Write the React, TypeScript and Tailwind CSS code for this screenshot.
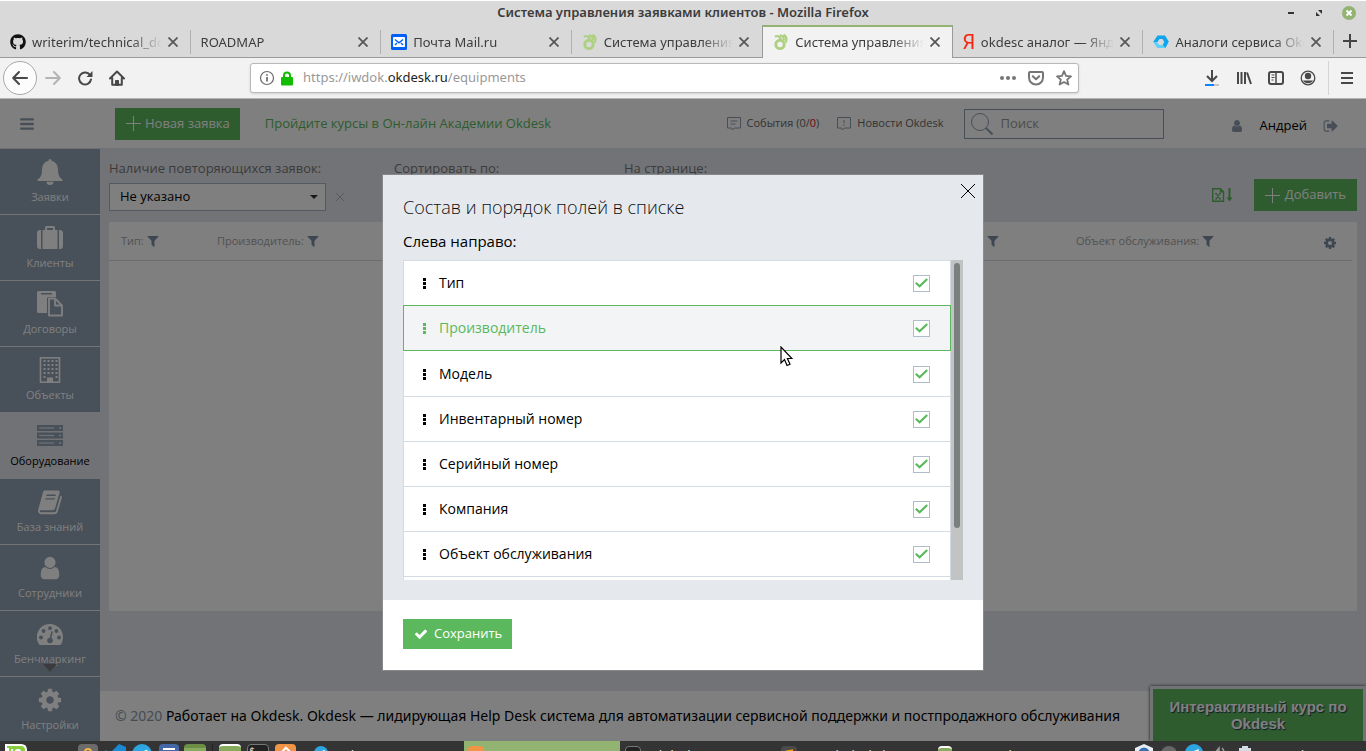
import React from 'react';
import { FaGithub } from 'react-icons/fa';

type IconProps = { className?: string };

const FILTER =
  'M1595 295q17 41-14 70l-493 493v742q0 42-39 59-13 5-25 5-27 0-45-19l-256-256q-19-19-19-45v-486l-493-493q-31-29-14-70 17-39 59-39h1280q42 0 59 39z';
const BARS =
  'M1664 1344v128q0 26-19 45t-45 19h-1408q-26 0-45-19t-19-45v-128q0-26 19-45t45-19h1408q26 0 45 19t19 45zm0-512v128q0 26-19 45t-45 19h-1408q-26 0-45-19t-19-45v-128q0-26 19-45t45-19h1408q26 0 45 19t19 45zm0-512v128q0 26-19 45t-45 19h-1408q-26 0-45-19t-19-45v-128q0-26 19-45t45-19h1408q26 0 45 19t19 45z';
const USER =
  'M1536 1399q0 109-62.5 187t-150.5 78h-854q-88 0-150.5-78t-62.5-187q0-85 8.5-160.5t31.5-152 58.5-131 94-89 134.5-34.5q131 128 313 128t313-128q76 0 134.5 34.5t94 89 58.5 131 31.5 152 8.5 160.5zm-256-887q0 159-112.5 271.5t-271.5 112.5-271.5-112.5-112.5-271.5 112.5-271.5 271.5-112.5 271.5 112.5 112.5 271.5z';
const COG =
  'M1152 896q0-106-75-181t-181-75-181 75-75 181 75 181 181 75 181-75 75-181zm512-109v222q0 12-8 23t-20 13l-185 28q-19 54-39 91 35 50 107 138 10 12 10 25t-9 23q-27 37-99 108t-94 71q-12 0-26-9l-138-108q-44 23-91 38-16 136-29 186-7 28-36 28h-222q-14 0-24.5-8.5t-11.5-21.5l-28-184q-49-16-90-37l-141 107q-10 9-25 9-14 0-25-11-126-114-165-168-7-10-7-23 0-12 8-23 15-21 51-66.5t54-70.5q-27-50-41-99l-183-27q-13-2-21-12.5t-8-23.5v-222q0-12 8-23t19-13l186-28q14-46 39-92-40-57-107-138-10-12-10-24 0-10 9-23 26-36 98.5-107.5t94.5-71.5q13 0 26 10l138 107q44-23 91-38 16-136 29-186 7-28 36-28h222q14 0 24.5 8.5t11.5 21.5l28 184q49 16 90 37l142-107q9-9 24-9 13 0 25 10 129 119 165 170 7 8 7 22 0 12-8 23-15 21-51 66.5t-54 70.5q26 50 41 98l183 28q13 2 21 12.5t8 23.5z';
const SIGN_OUT =
  'M704 1440q0 4 1 20t.5 26.5-3 23.5-10 19.5-20.5 6.5h-320q-119 0-203.5-84.5t-84.5-203.5v-704q0-119 84.5-203.5t203.5-84.5h320q13 0 22.5 9.5t9.5 22.5q0 4 1 20t.5 26.5-3 23.5-10 19.5-20.5 6.5h-320q-66 0-113 47t-47 113v704q0 66 47 113t113 47h312l11.5 1 11.5 3 8 5.5 7 9 2 13.5zm928-544q0 26-19 45l-544 544q-19 19-45 19t-45-19-19-45v-288h-448q-26 0-45-19t-19-45v-384q0-26 19-45t45-19h448v-288q0-26 19-45t45-19 45 19l544 544q19 19 19 45z';
const CHECK =
  'M1671 566q0 40-28 68l-724 724-136 136q-28 28-68 28t-68-28l-136-136-362-362q-28-28-28-68t28-68l136-136q28-28 68-28t68 28l294 295 656-657q28-28 68-28t68 28l136 136q28 28 28 68z';

function Glyph({ d, className }: { d: string; className?: string }) {
  return (
    <svg viewBox="0 0 1792 1792" fill="currentColor" className={className} aria-hidden="true">
      <path d={d} />
    </svg>
  );
}

/* ---------- Browser icons ---------- */

const CloseGlyph = ({ className }: IconProps) => (
  <svg viewBox="0 0 10 10" className={className} stroke="currentColor" fill="none" strokeWidth="1.7" aria-hidden="true">
    <path d="M0.5 0.5 9.5 9.5M9.5 0.5 0.5 9.5" />
  </svg>
);

const MailLogo = () => (
  <svg viewBox="0 0 16 16" className="size-4 shrink-0" aria-hidden="true">
    <rect width="16" height="16" rx="1.5" fill="#005ff9" />
    <rect x="2" y="3" width="12" height="10" rx="0.8" fill="#fff" />
    <path d="M4 5.500 8 8.800 12 5.500M4 11 6 9M12 11 10 9" stroke="#005ff9" strokeWidth="1.400" fill="none" />
  </svg>
);

const OkdeskLogo = () => (
  <svg viewBox="0 0 16 16" className="size-4 shrink-0" fill="none" stroke="#aed081" aria-hidden="true">
    <circle cx="7" cy="10.400" r="4.200" strokeWidth="2.900" />
    <path d="M2 2.800C4 1.200 6.500 2 8 5.500M6.800 1.300C9 1.300 10.800 3 11 6.500M10.500 0.700c3 1.500 3.600 4.300 2.200 8" strokeWidth="2.200" />
  </svg>
);

const YandexLogo = () => (
  <span className="flex w-3 shrink-0 justify-center font-['Roboto',sans-serif] text-[20px] leading-4 text-[#f8240f]">Я</span>
);

const HexLogo = () => (
  <svg viewBox="0 0 16 16" className="size-4 shrink-0" aria-hidden="true">
    <path d="M4.500 1.500H12L15.800 7.500 12.500 14 9.500 11.500 11.200 8 9.500 5H6.500L4 8.500 0.200 8z" fill="#0ea5ee" />
    <path d="M0.200 8 4 8.500 6.500 11h3.200l2.800 3H4.200z" fill="#5fd0fb" />
  </svg>
);

const tabs = [
  { title: 'writerim/technical_docs', icon: <FaGithub className="size-4 shrink-0 text-[#111]" /> },
  { title: 'ROADMAP', icon: null },
  { title: 'Почта Mail.ru', icon: <MailLogo /> },
  { title: 'Система управления заявками', icon: <OkdeskLogo /> },
  { title: 'Система управления заявками', icon: <OkdeskLogo />, active: true },
  { title: 'okdesc аналог — Яндекс', icon: <YandexLogo /> },
  { title: 'Аналоги сервиса Okdesk', icon: <HexLogo /> },
];

function TitleBar() {
  return (
    <div className="flex h-[25px] items-center border-t border-white px-2.5">
      <div className="w-20" />
      <h1 className="flex-1 text-center text-[13px] font-semibold text-[#3c3c3c]">
        Система управления заявками клиентов - Mozilla Firefox
      </h1>
      <div className="flex w-20 items-center justify-end gap-[18px]">
        <button aria-label="Свернуть">
          <svg viewBox="0 0 10 10" className="size-2.5"><path d="M2 5h6" stroke="#333" strokeWidth="2" /></svg>
        </button>
        <button aria-label="Развернуть">
          <svg viewBox="0 0 10 10" className="size-2.5" fill="#333"><path d="M4 2h4v4zM2 4v4h4z" /></svg>
        </button>
        <button aria-label="Закрыть">
          <svg viewBox="0 0 14 14" className="size-3.5">
            <circle cx="7" cy="7" r="7" fill="#92b372" />
            <path d="M4.500 4.500l5 5M9.500 4.500l-5 5" stroke="#fff" strokeWidth="1.800" />
          </svg>
        </button>
      </div>
    </div>
  );
}

function TabStrip() {
  return (
    <div className="flex h-[33px]">
      <div className="grid flex-1 grid-cols-7">
        {tabs.map((t, i) => (
          <div
            key={i}
            className={
              t.active
                ? 'flex min-w-0 items-center border-x border-t-2 border-x-[#9a9a9a] border-t-[#92b372] bg-[#f2f2f2] pr-3 pb-px pl-2.5'
                : 'flex min-w-0 items-center border-b border-[#9a9a9a] pt-0.5 pl-2.5'
            }
          >
            <div className="flex min-w-0 flex-1 items-center gap-1.5">
              {t.icon}
              <span className="flex-1 overflow-hidden text-[13px] leading-5 whitespace-nowrap text-[#3c3c3c] [mask-image:linear-gradient(to_right,black_calc(100%-32px),transparent)]">
                {t.title}
              </span>
            </div>
            <button aria-label="Закрыть вкладку" className="ml-1.5">
              <CloseGlyph className="size-2.5 text-[#555]" />
            </button>
            {!t.active && <span className={i === 3 ? 'ml-3 w-px' : 'ml-3 h-6 w-px bg-[#b0b0b0]'} />}
          </div>
        ))}
      </div>
      <button aria-label="Новая вкладка" className="flex w-8 items-center justify-center border-b border-[#9a9a9a]">
        <svg viewBox="0 0 14 14" className="size-3.5" stroke="#444" strokeWidth="2"><path d="M7 0v14M0 7h14" /></svg>
      </button>
    </div>
  );
}

function NavBar() {
  return (
    <div className="flex h-[41px] items-center border-b border-[#b4b4b4] bg-[#f2f2f2] pr-2.5 pl-[3px] text-[#484848]">
      <button aria-label="Назад" className="flex size-[34px] items-center justify-center rounded-full border border-[#a8a8a8] bg-[#fcfcfc]">
        <svg viewBox="0 0 16 16" className="size-4" fill="none" stroke="currentColor" strokeWidth="2" strokeLinecap="round" strokeLinejoin="round">
          <path d="M15 8H1.500M7 2 1.200 8 7 14" />
        </svg>
      </button>
      <button aria-label="Вперёд" className="ml-2 text-[#b4b4b4]">
        <svg viewBox="0 0 16 16" className="size-4" fill="none" stroke="currentColor" strokeWidth="2" strokeLinecap="round" strokeLinejoin="round">
          <path d="M1 8h13.500M9 2l5.800 6L9 14" />
        </svg>
      </button>
      <button aria-label="Обновить" className="ml-4">
        <svg viewBox="0 0 16 16" className="size-4" fill="none" stroke="currentColor" strokeWidth="2">
          <path d="M13.300 5.500A6 6 0 1 0 14 9.500" strokeLinecap="round" />
          <path d="M15.500 1v6h-6z" fill="currentColor" stroke="none" />
        </svg>
      </button>
      <button aria-label="Домой" className="ml-4">
        <svg viewBox="0 0 16 16" className="size-4" fill="none" stroke="currentColor" strokeWidth="2" strokeLinecap="round" strokeLinejoin="round">
          <path d="M1 8.500 8 1.500l7 7M3.200 8v6.800h9.600V8" />
          <path d="M6.500 15v-4.500h3V15z" fill="currentColor" strokeWidth="1" />
        </svg>
      </button>
      <div className="ml-[125px] flex h-[30px] w-[829px] items-center rounded-[3px] border border-[#b8b8b8] bg-white pr-1.5 pl-2 shadow-sm">
        <svg viewBox="0 0 16 16" className="size-4" fill="none" stroke="#6a6a6a" aria-hidden="true">
          <circle cx="8" cy="8" r="6.500" strokeWidth="1.200" />
          <path d="M8 7v4.500M8 4.200v1.600" strokeWidth="1.700" />
        </svg>
        <svg viewBox="0 0 12 15" className="ml-1.5 h-[15px] w-3" aria-hidden="true">
          <rect y="6" width="12" height="8.500" rx="1" fill="#12bc00" />
          <path d="M3 7V4.500a3 3 0 0 1 6 0V7" stroke="#12bc00" strokeWidth="2" fill="none" />
        </svg>
        <span className="ml-2.5 flex-1 text-[13px] text-[#999]">
          https://iwdok.<span className="text-[#222]">okdesk.ru</span>/equipments
        </span>
        <div className="flex items-center gap-3 text-[#757575]">
          <button aria-label="Действия">
            <svg viewBox="0 0 16 16" className="size-4" fill="currentColor">
              <circle cx="2" cy="8" r="2" /><circle cx="8" cy="8" r="2" /><circle cx="14" cy="8" r="2" />
            </svg>
          </button>
          <button aria-label="Pocket">
            <svg viewBox="0 0 16 16" className="size-4" fill="none" stroke="currentColor" strokeWidth="2" strokeLinecap="round" strokeLinejoin="round">
              <path d="M2 2h12a1 1 0 0 1 1 1v4.500a7 7 0 0 1-14 0V3a1 1 0 0 1 1-1zM4.800 6.200 8 9.300l3.200-3.100" />
            </svg>
          </button>
          <button aria-label="В закладки">
            <svg viewBox="0 0 16 16" className="size-4" fill="none" stroke="currentColor" strokeWidth="1.800" strokeLinejoin="round">
              <path d="M8 1.200l2 4.600 5 .5-3.800 3.300 1.200 5L8 12l-4.400 2.600 1.200-5L1 6.300l5-.5z" />
            </svg>
          </button>
        </div>
      </div>
      <div className="ml-auto flex items-center gap-4">
        <button aria-label="Загрузки">
          <svg viewBox="0 0 16 16" className="size-4" fill="none" strokeWidth="2">
            <path d="M8 0v10M3 6l5 5 5-5" stroke="currentColor" />
            <path d="M1 15h9" stroke="#0a84ff" /><path d="M10 15h5" stroke="#c4c4c4" />
          </svg>
        </button>
        <button aria-label="Библиотека">
          <svg viewBox="0 0 16 16" className="size-4" fill="none" stroke="currentColor" strokeWidth="2">
            <path d="M2 2v12M5.500 2v12M9 2v12M11 2.500 15 14" />
          </svg>
        </button>
        <button aria-label="Боковые панели">
          <svg viewBox="0 0 16 16" className="size-4" fill="none" stroke="currentColor">
            <rect x="1" y="2" width="14" height="12" rx="2" strokeWidth="2" />
            <path d="M8 2v12" strokeWidth="1.500" /><path d="M3.500 5h3M3.500 7.500h3M3.500 10h2" />
          </svg>
        </button>
        <button aria-label="Аккаунт">
          <svg viewBox="0 0 16 16" className="size-4" fill="currentColor">
            <circle cx="8" cy="8" r="6.800" fill="none" stroke="currentColor" strokeWidth="1.300" />
            <circle cx="8" cy="6" r="3.200" /><path d="M3 10.500h10a5.800 5.800 0 0 1-10 0z" />
          </svg>
        </button>
        <span className="-ml-1 h-[34px] w-px bg-[#d5d5d5]" />
        <button aria-label="Меню" className="-ml-1.5 pr-px">
          <svg viewBox="0 0 16 16" className="size-4" stroke="currentColor" strokeWidth="2"><path d="M2 3h12M2 8h12M2 13h12" /></svg>
        </button>
      </div>
    </div>
  );
}

/* ---------- Sidebar ---------- */

const Bell = () => (
  <svg viewBox="0 0 26 26" className="size-[26px]" fill="currentColor">
    <path d="M13 0c1 0 1.600.7 1.500 1.800C19 2.800 21 6.500 21 11c0 5 1.500 8 4.500 9.500V22H.5v-1.500C3.500 19 5 16 5 11c0-4.500 2-8.200 6.500-9.200C11.400.7 12 0 13 0zM9.500 22.800h7a3.500 3.200 0 0 1-7 0z" />
  </svg>
);
const Suitcase = () => (
  <svg viewBox="0 0 26 26" className="size-[26px]" fill="currentColor">
    <path d="M0 8a3 3 0 0 1 3-3h1v19H3a3 3 0 0 1-3-3zM26 8a3 3 0 0 0-3-3h-1v19h1a3 3 0 0 0 3-3zM5.500 5H8V2.500A1.500 1.500 0 0 1 9.500 1h7A1.500 1.500 0 0 1 18 2.500V5h2.500v19h-15zM10 5h6V3h-6z" />
  </svg>
);
const Papers = () => (
  <svg viewBox="0 0 26 26" className="size-[26px]" fill="currentColor">
    <path d="M1.500 0h16A1.500 1.500 0 0 1 19 1.500V6h-7.500A1.500 1.500 0 0 0 10 7.500V22H1.500A1.500 1.500 0 0 1 0 20.500v-19A1.500 1.500 0 0 1 1.500 0zM4 2v1.500h11V2z" fillRule="evenodd" />
    <path d="M12 7.500h6v7h7v10H12z" fill="none" stroke="currentColor" strokeWidth="1.800" strokeLinejoin="round" />
    <path d="M18 7.500l7 7" stroke="currentColor" strokeWidth="1.800" />
  </svg>
);
const Building = () => (
  <svg viewBox="0 0 26 26" className="size-[26px]">
    <rect x="3.500" y="0.800" width="19" height="24.400" fill="none" stroke="currentColor" strokeWidth="1.600" />
    {[3, 7, 11, 15].map((y) =>
      [7, 11, 15, 19].map((x) => <rect key={`${x}-${y}`} x={x - 0.5} y={y} width="2" height="2" fill="currentColor" />),
    )}
    <path d="M6.500 19h2v2h-2zM18.500 19h2v2h-2zM10 20.500h6V25h-6z" fill="currentColor" />
  </svg>
);
const Servers = () => (
  <svg viewBox="0 0 26 26" className="size-[26px]">
    {[2, 9.5, 17].map((y) => (
      <g key={y}>
        <rect y={y} width="26" height="6" fill="currentColor" />
        <path d={`M2 ${y + 3}h15`} stroke="#dfe3ea" strokeWidth="1.300" />
        <circle cx="23.200" cy={y + 3} r="1.100" fill="#dfe3ea" />
      </g>
    ))}
  </svg>
);
const Book = () => (
  <svg viewBox="0 0 26 26" className="size-[26px]" fill="currentColor">
    <path d="M8 1.500h13c1.500 0 2 1 1.600 2.200L18 19.500c-.4 1.200-1.200 1.700-2.300 1.700H4c-1 0-1.300.5-1 1.200.3.600.8.800 1.500.8h12.600c1 0 1.600-.4 1.900-1.200l4.600-15.500c1.200.6 1.500 1.300 1.200 2.500l-4.200 14c-.5 1.500-1.500 2.200-3 2.200H4.500C2 25.200.600 23.200 1.200 20.800L6 3.300C6.300 2.100 7 1.500 8 1.500zm1.600 4-.4 1.400h9.300l.4-1.400zm-1 3.700-.4 1.400h9.300l.4-1.400z" fillRule="evenodd" />
  </svg>
);
const Person = () => <Glyph d={USER} className="size-[26px]" />;
const Gauge = () => (
  <svg viewBox="0 0 26 26" className="size-[26px]">
    <path d="M13 3a13 13 0 0 1 13 13c0 3-.8 5.500-2.200 7.500-.3.400-.6.500-1 .5H3.200c-.4 0-.7-.1-1-.5A13 13 0 0 1 13 3z" fill="currentColor" />
    <g fill="#90a0b2">
      <circle cx="4" cy="16.500" r="1.900" /><circle cx="6.600" cy="10" r="1.900" /><circle cx="13" cy="7.200" r="1.900" />
      <circle cx="19.400" cy="10" r="1.900" /><circle cx="22" cy="16.500" r="1.900" /><circle cx="13" cy="19.500" r="2.800" />
    </g>
    <path d="M13 19l2-8" stroke="#90a0b2" strokeWidth="1.500" strokeLinecap="round" />
  </svg>
);
const Gear = () => <Glyph d={COG} className="size-[26px]" />;

const menu = [
  { label: 'Заявки', Icon: Bell },
  { label: 'Клиенты', Icon: Suitcase },
  { label: 'Договоры', Icon: Papers },
  { label: 'Объекты', Icon: Building },
  { label: 'Оборудование', Icon: Servers, active: true },
  { label: 'База знаний', Icon: Book },
  { label: 'Сотрудники', Icon: Person },
  { label: 'Бенчмаркинг', Icon: Gauge, more: true },
  { label: 'Настройки', Icon: Gear },
];

function Sidebar() {
  return (
    <nav className="flex w-[100px] shrink-0 flex-col overflow-hidden bg-[#90a0b2]">
      {menu.map(({ label, Icon, active, more }) => (
        <a
          key={label}
          href="#"
          className={
            active
              ? 'relative flex h-[66px] shrink-0 flex-col items-center gap-px bg-[#e2e5eb] pt-2.5 text-[11px] leading-[22px] text-black'
              : 'relative flex h-[66px] shrink-0 flex-col items-center gap-px border-b border-[#e5e9ee] pt-2.5 text-[11px] leading-[22px] text-white last:border-b-0'
          }
        >
          <span className={active ? 'h-[26px] text-[#90a0b2]' : 'h-[26px] text-white'}><Icon /></span>
          <span>{label}</span>
          {more && (
            <svg viewBox="0 0 14 8" className="absolute bottom-1 left-[43px] h-2 w-3.5" fill="#77777f"><path d="M0 0h14L7 8z" /></svg>
          )}
        </a>
      ))}
    </nav>
  );
}

/* ---------- Page ---------- */

const Plus = () => (
  <svg viewBox="0 0 15 15" className="size-[15px]" stroke="currentColor" strokeWidth="1" aria-hidden="true">
    <path d="M7.500 0v15M0 7.500h15" />
  </svg>
);

function Header() {
  return (
    <header className="flex h-[50px] shrink-0 items-center border-b border-[#dfe3e8] bg-white pl-[19px] text-[13px]">
      <button aria-label="Меню" className="text-[#909db0]"><Glyph d={BARS} className="size-4" /></button>
      <button className="ml-20 flex h-8 items-center gap-1 bg-[#5cb85c] pr-2.5 pl-[11px] text-white">
        <Plus /><span className="whitespace-nowrap">Новая заявка</span>
      </button>
      <a href="#" className="ml-[25px] whitespace-nowrap text-[#5cb85c]">Пройдите курсы в Он-лайн Академии Okdesk</a>
      <div className="ml-auto flex items-center">
        <a href="#" className="flex items-center gap-1.5 text-[11px] whitespace-nowrap text-[#666]">
          <svg viewBox="0 0 14 14" className="size-3.5" fill="none" stroke="#909db0">
            <path d="M.500 .500h13v10.500H7.500l-2 2-1-2h-4zM3.500 4h7M3.500 7h5" />
          </svg>
          <span>События (0/<span className="text-[#f00020]">0</span>)</span>
        </a>
        <a href="#" className="ml-[18px] flex items-center gap-1.5 text-[11px] whitespace-nowrap text-[#666]">
          <svg viewBox="0 0 14 14" className="size-3.5" fill="none" stroke="#909db0">
            <path d="M.500 .500h13v10.500H7.500l-2 2-1-2h-4zM7 3v3.500M7 7.500v1.500" />
          </svg>
          <span>Новости Okdesk</span>
        </a>
        <label className="ml-5 flex h-[30px] w-[200px] items-center gap-2 border border-[#909db0] pl-1.5">
          <svg viewBox="0 0 22 22" className="size-[22px] shrink-0" fill="none" stroke="#909db0">
            <circle cx="9" cy="9" r="8.500" /><path d="M15 15l6.500 6.500" strokeWidth="2" />
          </svg>
          <input type="search" aria-label="Поиск" placeholder="Поиск" className="w-full bg-transparent outline-none placeholder:text-[#999]" />
        </label>
        <a href="#" className="ml-[66px] flex items-center gap-4 pt-1 text-black">
          <Glyph d={USER} className="size-3.5 text-[#909db0]" /><span>Андрей</span>
        </a>
        <a href="#" aria-label="Выйти" className="mr-[27px] ml-4 pt-1 text-[#909db0]"><Glyph d={SIGN_OUT} className="size-4" /></a>
      </div>
    </header>
  );
}

function FilterSelect({ id, label, value, width }: { id: string; label: string; value: string; width: string }) {
  return (
    <div className="flex flex-col">
      <label htmlFor={id} className="text-[13px] leading-5 whitespace-nowrap text-[#777]">{label}</label>
      <div className="mt-[5px] flex items-center">
        <div className={`grid items-center ${width}`}>
          <select id={id} className="h-7 w-full appearance-none border border-[#a9b4c4] bg-white px-2.5 text-[13px] text-black [grid-area:1/1]">
            <option>{value}</option>
          </select>
          <svg viewBox="0 0 8 4" className="pointer-events-none mr-2 h-1 w-2 justify-self-end [grid-area:1/1]" fill="#333"><path d="M0 0h8L4 4z" /></svg>
        </div>
        <button aria-label="Сбросить" className="ml-2.5">
          <svg viewBox="0 0 8 8" className="size-2" stroke="#b5b5bb"><path d="M0 0l8 8M8 0 0 8" /></svg>
        </button>
      </div>
    </div>
  );
}

const columns = [
  { label: 'Тип:', width: 'w-24' },
  { label: 'Производитель:', width: 'w-[150px]' },
  { label: '', width: '' },
  { label: 'Компания:', width: 'w-[149px]' },
  { label: 'Объект обслуживания:', width: 'w-[250px]' },
];

function Content() {
  return (
    <div className="flex min-w-0 flex-1 flex-col bg-[#e5e7ed]">
      <main className="flex flex-1 flex-col px-[9px] pb-20">
        <div className="flex items-start pt-[9px]">
          <FilterSelect id="repeat" label="Наличие повторяющихся заявок:" value="Не указано" width="w-[217px]" />
          <div className="w-[50px]" />
          <FilterSelect id="sort" label="Сортировать по:" value="Тип" width="w-[190px]" />
          <div className="w-[22px]" />
          <FilterSelect id="perpage" label="На странице:" value="25" width="w-[120px]" />
          <div className="mt-[21px] ml-auto flex items-center">
            <button aria-label="Экспорт в Excel" className="text-[#5cb85c]">
              <svg viewBox="0 0 21 14" className="h-3.5 w-[21px]" fill="none" stroke="currentColor">
                <path d="M.700 .700h7.800l3 3v9.600H.700zM8.500 .700v3h3" strokeWidth="1.400" />
                <path d="M4 5.500l4 5.500M8 5.500 4 11M3 5.500h2M7 5.500h2M3 11h2M7 11h2" strokeWidth="1.200" />
                <path d="M17.500 0v11" strokeWidth="2" /><path d="M14.500 9.500h6l-3 4z" fill="currentColor" stroke="none" />
              </svg>
            </button>
            <button className="ml-[21px] flex h-8 items-center gap-[5px] bg-[#5cb85c] px-[11px] text-[13px] text-white">
              <Plus />Добавить
            </button>
          </div>
        </div>
        <div className="mt-[11px] flex-1 bg-white pr-[5px]">
          <table className="w-full table-fixed">
            <thead>
              <tr className="h-[38px] border-b border-[#d5d8de] text-left text-[11px] text-[#a5a5a5]">
                {columns.map((c) =>
                  c.label ? (
                    <th key={c.label} className={`pr-0 pl-3 font-normal whitespace-nowrap ${c.width}`}>
                      <span className="flex items-center gap-0.5">
                        {c.label}<Glyph d={FILTER} className="size-3.5 text-[#7d8da5]" />
                      </span>
                    </th>
                  ) : (
                    <td key="middle" />
                  ),
                )}
                <th className="w-[38px] pt-1 pl-[9px]">
                  <button aria-label="Настройка полей" className="block"><Glyph d={COG} className="size-3.5 text-[#7d8da5]" /></button>
                </th>
              </tr>
            </thead>
          </table>
        </div>
      </main>
      <footer className="flex h-[50px] shrink-0 items-center bg-white pb-0.5 pl-[15px] font-['Noto_Sans',sans-serif] text-[14px] whitespace-nowrap text-black">
        <span><span className="text-[#8c98a8]">© 2020</span> Работает на Okdesk. Okdesk — лидирующая Help Desk система для автоматизации сервисной поддержки и постпродажного обслуживания</span>
      </footer>
    </div>
  );
}

/* ---------- Dialog ---------- */

const fields = ['Тип', 'Производитель', 'Модель', 'Инвентарный номер', 'Серийный номер', 'Компания', 'Объект обслуживания'];

function rowClass(i: number) {
  if (i === 1) return 'flex h-[46px] shrink-0 items-center border border-[#5cb85c] bg-[#f2f4f6] pr-5 pl-[19px] text-[#5cb85c]';
  if (i === 2) return 'flex h-[45px] shrink-0 items-center border border-x-[#d5dbe3] border-t-white pr-5 pl-[19px] border-b-0 bg-white text-black';
  return 'flex h-[45px] shrink-0 items-center border border-b-0 border-[#d5dbe3] bg-white pr-5 pl-[19px] text-black';
}

function Dialog() {
  return (
    <section role="dialog" aria-labelledby="dialog-title" className="relative flex w-[600px] flex-col bg-white shadow-[0_0_0_1px_rgba(150,150,150,0.6)]">
      <div className="bg-[#e5e9ee] px-5 pb-5">
        <button aria-label="Закрыть" className="absolute top-[9px] right-2">
          <svg viewBox="0 0 14 14" className="size-3.5" stroke="#000"><path d="M0 0l14 14M14 0 0 14" /></svg>
        </button>
        <h2 id="dialog-title" className="pt-5 text-[18px] leading-6 font-light text-[#111]">Состав и порядок полей в списке</h2>
        <p className="mt-3 text-[15px] leading-5 text-black">Слева направо:</p>
        <div className="mt-[9px] flex h-80 overflow-hidden">
          <ul className="flex flex-1 flex-col text-[14px]">
            {fields.map((f, i) => (
              <li key={f} className={rowClass(i)}>
                <svg viewBox="0 0 3 11" className="h-[11px] w-[3px]" fill="currentColor"><path d="M0 0h3v3H0zM0 4h3v3H0zM0 8h3v3H0z" /></svg>
                <label htmlFor={`field-${i}`} className="ml-[13px] flex-1 pb-0.5">{f}</label>
                <span className="grid place-items-center">
                  <input id={`field-${i}`} type="checkbox" defaultChecked className="size-[17px] appearance-none border border-[#b0bccb] bg-white [grid-area:1/1]" />
                  <svg viewBox="0 0 13 10" className="pointer-events-none h-2.5 w-[13px] [grid-area:1/1]" fill="none" stroke="#5cb85c" strokeWidth="2.200">
                    <path d="M.800 4.800 4.600 8.300 12.200 1" />
                  </svg>
                </span>
              </li>
            ))}
            <li className="flex-1 border border-b-0 border-[#d5dbe3] bg-white" />
          </ul>
          <div className="flex w-3 justify-center bg-[#c2c4c4] pt-[3px]">
            <div className="h-[265px] w-1.5 rounded-full bg-[#7b7f80]" />
          </div>
        </div>
      </div>
      <div className="flex h-[70px] items-start px-5 pt-[19px]">
        <button className="flex h-[30px] items-center gap-1.5 bg-[#5cb85c] pr-2.5 pl-[11px] text-[13px] text-white">
          <Glyph d={CHECK} className="size-3.5" />Сохранить
        </button>
      </div>
    </section>
  );
}

/* ---------- Desktop panel ---------- */

function AppTile({ className, children }: { className: string; children?: React.ReactNode }) {
  return <span className={`flex h-5 shrink-0 justify-center rounded-[4px] ${className}`}>{children}</span>;
}

function Telegram({ className }: IconProps) {
  return (
    <svg viewBox="0 0 20 20" className={className}>
      <circle cx="10" cy="10" r="10" fill="#2ca5e0" /><path d="M4 10 15.500 5.500 13.500 15l-4-3z" fill="#fff" />
    </svg>
  );
}

function Taskbar() {
  return (
    <div className="flex h-2.5 shrink-0 items-start overflow-hidden bg-[#343434] pt-[3px] text-[13px] leading-[18px] whitespace-nowrap text-[#e8e8e8]">
      <svg viewBox="0 0 22 20" className="ml-[5px] h-5 w-[22px] shrink-0">
        <path d="M0 0h16q6 0 6 6v14H6q-6 0-6-6z" fill="#fff" />
        <path d="M2 2h14q4 0 4 4v12H8q-4 0-4-4V4H2z" fill="#87cf3e" />
        <path d="M7 5v8q0 2 2 2h6V7q0-1-2-1t-2 1v5" stroke="#fff" strokeWidth="1.800" fill="none" />
      </svg>
      <span className="w-[51px] shrink-0 pt-0.5 pl-1.5">Меню</span>
      <AppTile className="mr-1.5 w-5 bg-[#6b6b6b]"><span className="mt-1 size-2 rounded-full border-2 border-[#f0b840]" /></AppTile>
      <svg viewBox="0 0 22 20" className="h-5 w-[22px] shrink-0"><path d="M15 0l7 3v14l-7 3L0 8l2-2 4 3z" fill="#1a8ad4" /></svg>
      <Telegram className="ml-1.5 size-5 shrink-0" />
      <AppTile className="ml-[7px] w-5 bg-[#4467a8]"><span className="mt-1 h-3 w-3 border-y-2 border-white" /></AppTile>
      <AppTile className="ml-[5px] w-[22px] border-t-4 border-[#6d8f45] bg-[#87ab5c]" />
      <span className="ml-1.5 h-5 w-px bg-[#222]" />
      <AppTile className="ml-1.5 w-[22px] border-t-2 border-white bg-[#87ab5c]" />
      <AppTile className="ml-1.5 w-[22px] border border-[#777] bg-[#222] pr-2 text-[9px] leading-3">$_</AppTile>
      <AppTile className="ml-1.5 w-[21px] bg-[#f29446]"><span className="mt-1 size-2 rotate-45 border-2 border-white" /></AppTile>
      <div className="flex w-[168px] shrink-0 items-start pl-[18px]">
        <Telegram className="mt-0.5 size-3.5" /><span className="mt-0.5 ml-[9px]">Telegram</span>
      </div>
      <div className="-mt-[3px] flex h-6 w-[156px] shrink-0 items-start bg-[#92b372] pt-[5px] pl-1 text-white">
        <AppTile className="w-4 bg-[#f29446]" /><span className="ml-2.5">Система упра…</span>
      </div>
      <div className="flex w-[161px] shrink-0 items-start pt-0.5 pl-[5px]">
        <AppTile className="w-4 border border-[#777] bg-[#222]" /><span className="ml-2.5">okdesk — Справка</span>
      </div>
      <div className="flex w-[157px] shrink-0 items-start pt-0.5">
        <AppTile className="w-4 bg-[#4a4a4a]"><span className="mt-1 h-2 w-2 -skew-y-12 bg-[#ff9800]" /></AppTile><span className="ml-2">~/technical_docs</span>
      </div>
      <div className="flex flex-1 items-start pt-0.5">
        <AppTile className="w-3.5 border-t-2 border-white bg-[#87ab5c]" /><span className="ml-2.5">screenshots</span>
      </div>
      <div className="flex shrink-0 items-start gap-2 pr-1">
        <svg viewBox="0 0 18 20" className="h-5 w-[18px]"><path d="M9 0l9 4v8l-9 8-9-8V4z" fill="#e8eef5" /><circle cx="9" cy="9" r="5.500" fill="#3a6fb0" /></svg>
        <svg viewBox="0 0 16 16" className="mt-0.5 size-4"><circle cx="8" cy="8" r="8" fill="#666" /></svg>
        <Telegram className="size-[18px]" />
        <svg viewBox="0 0 16 16" className="mt-0.5 size-4" fill="none" stroke="#999" strokeWidth="1.500"><path d="M3 8l5-6v12zM11 2c3 3 3 9 0 12" /></svg>
        <svg viewBox="0 0 12 16" className="mt-0.5 ml-1 h-4 w-3" fill="#d5dbe3"><path d="M3 0h6v2h3v14H0V2h3z" /></svg>
        <span className="mt-0.5 ml-0.5">Пт 14 фев, 13:30</span>
      </div>
    </div>
  );
}

export default function App() {
  return (
    <div className="relative flex h-screen min-h-0 flex-col overflow-hidden bg-[#d9d9d9] font-['Open_Sans',sans-serif]">
      <div className="shrink-0 font-['Noto_Sans',sans-serif]">
        <TitleBar />
        <TabStrip />
        <NavBar />
      </div>
      <div className="relative flex min-h-0 flex-1 flex-col">
        <Header />
        <div className="flex min-h-0 flex-1">
          <Sidebar />
          <Content />
        </div>
        <button className="absolute right-0 bottom-0 h-[55px] w-[216px] border-3 border-b-0 border-[#e5e7ed] bg-[#5cb85c] font-['Liberation_Sans',sans-serif] text-[15px] leading-[17px] font-bold text-white shadow-[0_0_3px_#333] [text-shadow:1px_1px_1px_#235]">
          Интерактивный курс по Okdesk
        </button>
        <div className="absolute inset-0 flex items-start justify-center bg-black/50 pt-[76px]">
          <Dialog />
        </div>
      </div>
      <div className="shrink-0 font-['Noto_Sans',sans-serif]"><Taskbar /></div>
      <svg viewBox="0 0 13 21" className="pointer-events-none absolute top-[346px] left-[780px] h-[21px] w-[13px]" aria-hidden="true">
        <path d="M1 1v16l3.500-3.500L7 19.500l3-1.300-2.600-5.700H12z" fill="#fff" stroke="#000" strokeWidth="1.200" />
      </svg>
    </div>
  );
}
